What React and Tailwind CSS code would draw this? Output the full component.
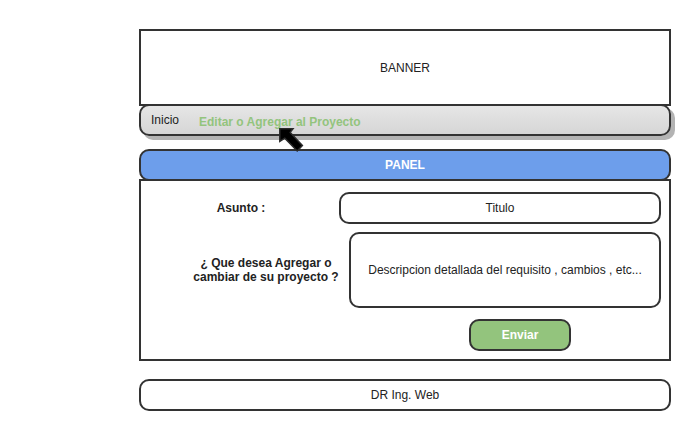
export default function App() {
  return (
    <div className="bg-white pt-[29px] pr-[25px] pb-5 pl-[139px] font-['Liberation_Sans',Arial,sans-serif] text-xs leading-[14px] text-[#222]">
      <header>
        <div className="flex h-[77px] items-center justify-center border-2 border-[#333]">BANNER</div>
        <nav className="relative -mt-0.5 flex h-8 items-center gap-5 rounded-[10px] border-2 border-[#333] bg-linear-to-b from-[#e6e6e6] to-[#d6d6d6] px-2.5 shadow-[4px_4px_0_#b3b3b3]">
          <a href="#inicio">Inicio</a>
          <a href="#editar" className="pt-1 font-bold text-[#93c47d]">Editar o Agregar al Proyecto</a>
          <svg className="pointer-events-none absolute top-[21px] left-[138px] z-10 h-[26px] w-[26px]" viewBox="0 0 26 26" aria-hidden="true">
            <path d="M0.8 1.8 L14 1.8 L11.2 5.4 L23.4 18.6 L18.2 24 L5.8 11.2 L0.8 14.4 Z" fill="#000" stroke="#2b2b2b" strokeWidth="1.5" strokeLinejoin="miter" />
          </svg>
        </nav>
      </header>

      <main className="mt-[13px]">
        <h1 className="flex h-8 items-center justify-center rounded-[10px] border-2 border-[#333] bg-[#6d9eeb] font-bold text-white">PANEL</h1>
        <form className="-mt-0.5 border-2 border-[#333] pt-[11px] pr-2 pb-2" onSubmit={(e) => e.preventDefault()}>
          <div className="flex items-center">
            <label htmlFor="asunto" className="w-[198px] shrink-0 pl-0.5 text-center font-bold">Asunto :</label>
            <input id="asunto" type="text" placeholder="Titulo" className="h-8 min-w-0 flex-1 rounded-[10px] border-2 border-[#333] bg-white text-center placeholder:text-[#222] placeholder:opacity-100" />
          </div>
          <div className="mt-2 flex items-center">
            <label htmlFor="detalle" className="w-[208px] shrink-0 pl-[42px] text-center font-bold">
              ¿ Que desea Agregar o<br />cambiar de su proyecto ?
            </label>
            <textarea id="detalle" placeholder="Descripcion detallada del requisito , cambios , etc..." className="block h-[76px] min-w-0 flex-1 resize-none overflow-hidden rounded-[10px] border-2 border-[#333] bg-white pt-[29px] text-center placeholder:text-[#222] placeholder:opacity-100" />
          </div>
          <div className="mt-[11px] flex justify-end pr-[90px]">
            <button type="submit" className="h-8 w-[102px] rounded-[10px] border-2 border-[#333] bg-[#93c47d] font-bold text-white">Enviar</button>
          </div>
        </form>
      </main>

      <footer className="mt-[18px] flex h-8 items-center justify-center rounded-[10px] border-2 border-[#333]">DR Ing. Web</footer>
    </div>
  );
}
